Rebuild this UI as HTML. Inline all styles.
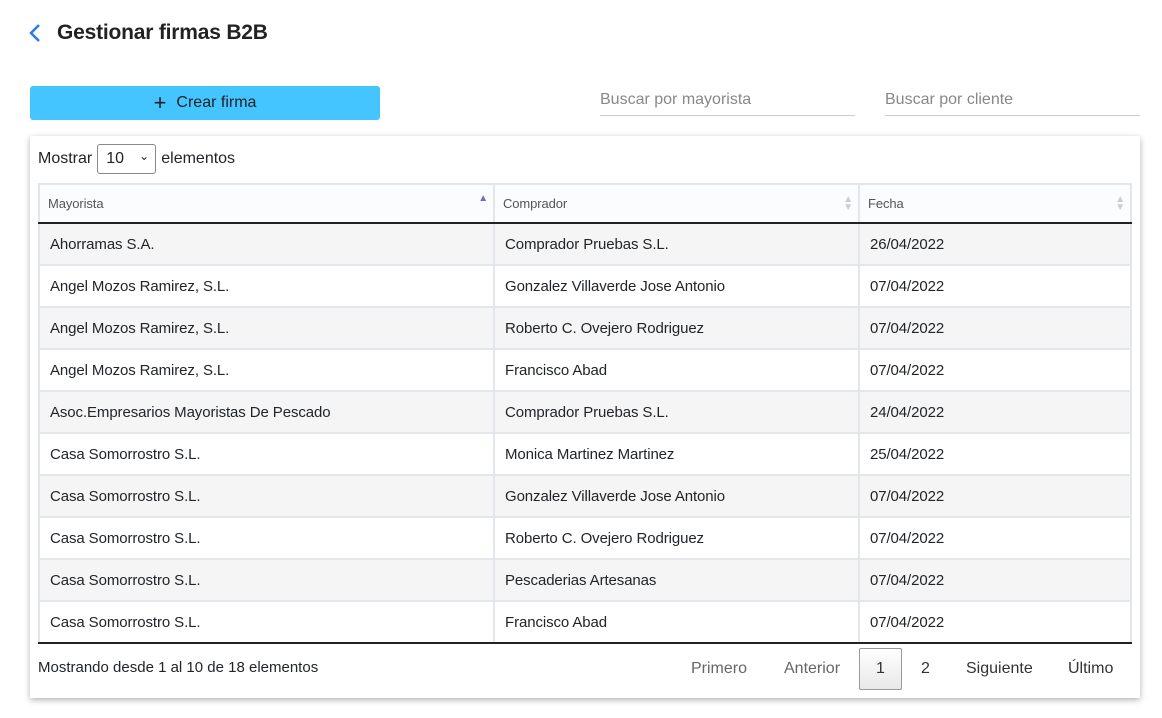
<!DOCTYPE html>
<html><head><style>
*{box-sizing:border-box;margin:0;padding:0}
body{width:1162px;height:718px;background:#fff;font-family:"Liberation Sans",Arial,sans-serif;color:#212529;position:relative;overflow:hidden}
.abs{position:absolute}
h1{position:absolute;left:57px;top:21px;font-size:21px;font-weight:bold;color:#222;letter-spacing:-0.2px}
.btn{left:30px;top:86px;width:350px;height:34px;background:#45c5ff;border-radius:3px;font-size:16px;color:#222;display:flex;align-items:center;justify-content:center}
.inp{top:91px;height:25px;border-bottom:1px solid #ccc;font-size:16px;color:#888}
.card{left:30px;top:136px;width:1110px;height:562px;background:#fff;box-shadow:0 2px 6px rgba(0,0,0,.3)}
table{position:absolute;left:38px;top:183px;border-collapse:collapse;width:1094px;font-size:15px;letter-spacing:-0.1px}
td,th{border:2px solid #e3e6ea;height:42px;padding:0 10px;text-align:left}
th{height:39px;font-weight:normal;font-size:13px;color:#555;background:#fbfcfe;border-bottom:2px solid #222;position:relative;padding:0 8px}
tr:nth-child(odd) td{background:#f5f5f5}
tbody tr:last-child td{border-bottom:2px solid #222}
.s{position:absolute;right:5px;top:11px;font-size:10px;line-height:8px;color:#ccc}
.pg{top:648px;height:42px;font-size:16px;color:#666;display:flex;align-items:center}
</style></head><body>
<svg class="abs" style="left:28px;top:23px" width="14" height="20"><path d="M11 2L3 10l8 8" stroke="#2a7de1" stroke-width="2.5" fill="none"/></svg>
<h1>Gestionar firmas B2B</h1>
<div class="abs btn"><span style="font-size:22px;margin-right:10px;line-height:1">+</span>Crear firma</div>
<div class="abs inp" style="left:600px;width:255px">Buscar por mayorista</div>
<div class="abs inp" style="left:885px;width:255px">Buscar por cliente</div>
<div class="abs card"></div>
<div class="abs" style="left:38px;top:144px;font-size:16px;display:flex;align-items:center">Mostrar <span style="display:inline-block;width:59px;height:30px;border:1px solid #888;border-radius:3px;margin:0 5px;padding:5px 8px;font-size:16px;position:relative">10<span style="position:absolute;right:6px;top:4px;font-size:12px">⌄</span></span> elementos</div>
<table>
<thead><tr><th style="width:455px">Mayorista<span class="s" style="color:#6a6ad0;top:10px">▲</span></th><th style="width:365px">Comprador<span class="s">▲<br>▼</span></th><th>Fecha<span class="s">▲<br>▼</span></th></tr></thead>
<tbody>
<tr><td>Ahorramas S.A.</td><td>Comprador Pruebas S.L.</td><td>26/04/2022</td></tr>
<tr><td>Angel Mozos Ramirez, S.L.</td><td>Gonzalez Villaverde Jose Antonio</td><td>07/04/2022</td></tr>
<tr><td>Angel Mozos Ramirez, S.L.</td><td>Roberto C. Ovejero Rodriguez</td><td>07/04/2022</td></tr>
<tr><td>Angel Mozos Ramirez, S.L.</td><td>Francisco Abad</td><td>07/04/2022</td></tr>
<tr><td>Asoc.Empresarios Mayoristas De Pescado</td><td>Comprador Pruebas S.L.</td><td>24/04/2022</td></tr>
<tr><td>Casa Somorrostro S.L.</td><td>Monica Martinez Martinez</td><td>25/04/2022</td></tr>
<tr><td>Casa Somorrostro S.L.</td><td>Gonzalez Villaverde Jose Antonio</td><td>07/04/2022</td></tr>
<tr><td>Casa Somorrostro S.L.</td><td>Roberto C. Ovejero Rodriguez</td><td>07/04/2022</td></tr>
<tr><td>Casa Somorrostro S.L.</td><td>Pescaderias Artesanas</td><td>07/04/2022</td></tr>
<tr><td>Casa Somorrostro S.L.</td><td>Francisco Abad</td><td>07/04/2022</td></tr>
</tbody></table>
<div class="abs" style="left:38px;top:659px;font-size:15px">Mostrando desde 1 al 10 de 18 elementos</div>
<div class="abs pg" style="left:691px">Primero</div>
<div class="abs pg" style="left:784px">Anterior</div>
<div class="abs" style="left:859px;top:648px;width:43px;height:42px;border:1px solid #999;border-radius:2px;background:linear-gradient(#fff,#e8e8e8);font-size:16px;display:flex;align-items:center;justify-content:center;color:#333">1</div>
<div class="abs pg" style="left:921px;color:#333">2</div>
<div class="abs pg" style="left:966px;color:#333">Siguiente</div>
<div class="abs pg" style="left:1068px;color:#333">Último</div>
</body></html>
